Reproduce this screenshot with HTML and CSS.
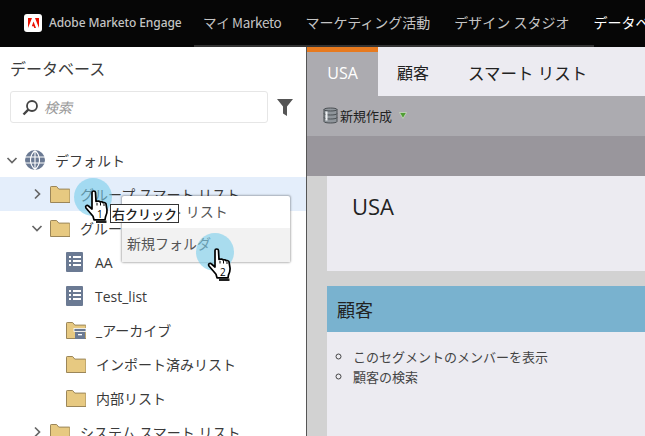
FILE: index.html
```html
<!DOCTYPE html>
<html lang="ja">
<head>
<meta charset="utf-8">
<title>Marketo データベース</title>
<link rel="stylesheet" href="styles.css">
</head>
<body>
<svg class="defs" width="0" height="0" aria-hidden="true">
  <defs>
    <symbol id="folder" viewBox="0 0 20 17">
      <path d="M.5 16.500V1.200q0-.7.7-.7h5.400l2.200 2.600h10.500q.7 0 .7.7v12.700z" fill="#e7c981" stroke="#9b8659"/>
    </symbol>
    <symbol id="list" viewBox="0 0 18 20">
      <rect width="17" height="20" rx="1" fill="#6b7a93"/>
      <path d="M3 4h2v2H3zM7 4h8v2H7zM3 8h2v2H3zM7 8h8v2H7zM3 12h2v2H3zM7 12h8v2H7z" fill="#fff"/>
    </symbol>
    <symbol id="hand" viewBox="0 0 28 36">
      <path d="M9 2.500c0-2 3.400-2 3.500 0l.5 9 2-.4c1.200-.2 2 .3 2.200 1 1-.6 2.600-.4 3 .7 1-.5 2.500-.1 2.800 1l1 6c.3 2.500-.5 5-1.500 7l-.5 3H11l-1-3.500L3 18c-1.200-2 1-3.500 2.500-2L9 19z" fill="#fff" stroke="#000" stroke-width="1.700" stroke-linejoin="round"/>
      <path d="M13 30.500h10.500v2.500H13z" fill="#222"/>
      <path d="M14 13v2.500M17.500 13v2.500M21 14v2" stroke="#000" stroke-width="1"/>
    </symbol>
  </defs>
</svg>

<header class="topbar">
  <div class="brand">
    <span class="logo">
      <svg width="11" height="10" viewBox="0 0 11 10"><path d="M4 0H0v10zM7 0h4v10zM5.500 3.600 8 10H6.300l-.7-1.800H3.800z" fill="#eb1000"/></svg>
    </span>
    <span class="brand-name">Adobe Marketo Engage</span>
  </div>
  <nav class="mainnav">
    <span class="navitem first">マイ Marketo</span>
    <span class="navitem">マーケティング活動</span>
    <span class="navitem">デザイン スタジオ</span>
    <span class="navitem active">データベース</span>
  </nav>
</header>

<div class="app">
  <aside class="sidebar">
    <h1 class="side-title">データベース</h1>
    <div class="search-row">
      <div class="search">
        <svg class="search-icon" width="17" height="17" viewBox="0 0 17 17"><circle cx="10" cy="7" r="5" fill="none" stroke="#444" stroke-width="1.800"/><path d="M6.300 10.700 1.500 15.500" stroke="#444" stroke-width="2.400"/></svg>
        <span class="placeholder">検索</span>
      </div>
      <svg class="filter" width="16" height="17" viewBox="0 0 16 17"><path d="M0 0h16L10 7.500V17l-4-2.500V7.500z" fill="#555"/></svg>
    </div>

    <ul class="tree">
      <li class="row lvl0">
        <svg class="chev" width="12" height="12" viewBox="0 0 12 12"><path d="M1.500 4 6 8.500 10.500 4" fill="none" stroke="#666" stroke-width="1.700"/></svg>
        <svg class="globe" width="20" height="20" viewBox="0 0 20 20"><circle cx="10" cy="10" r="10" fill="#6b7a93"/><path d="M0 7h20M0 13h20M10 0v20M10 .5c-6 5-6 14 0 19M10 .5c6 5 6 14 0 19" fill="none" stroke="#fff" stroke-width="1.100"/></svg>
        <span class="label">デフォルト</span>
      </li>
      <li class="row lvl1 selected">
        <svg class="chev" width="12" height="12" viewBox="0 0 12 12"><path d="M4 1.500 8.500 6 4 10.500" fill="none" stroke="#666" stroke-width="1.700"/></svg>
        <svg class="ficon"><use href="#folder"/></svg>
        <span class="label">グループ スマート リスト</span>
      </li>
      <li class="row lvl1">
        <svg class="chev" width="12" height="12" viewBox="0 0 12 12"><path d="M1.500 4 6 8.500 10.500 4" fill="none" stroke="#666" stroke-width="1.700"/></svg>
        <svg class="ficon"><use href="#folder"/></svg>
        <span class="label">グループ リスト</span>
      </li>
      <li class="row lvl2">
        <svg class="licon"><use href="#list"/></svg>
        <span class="label">AA</span>
      </li>
      <li class="row lvl2">
        <svg class="licon"><use href="#list"/></svg>
        <span class="label">Test_list</span>
      </li>
      <li class="row lvl2">
        <svg class="ficon" viewBox="0 0 20 17"><use href="#folder" width="20" height="17"/><rect x="8" y="6.500" width="12" height="3" fill="#6b7a93" stroke="#fff" stroke-width=".8"/><path d="M9 10h10v7H9z" fill="#6b7a93"/><path d="M12 12h4v1.300h-4z" fill="#fff"/></svg>
        <span class="label">_アーカイブ</span>
      </li>
      <li class="row lvl2">
        <svg class="ficon"><use href="#folder"/></svg>
        <span class="label">インポート済みリスト</span>
      </li>
      <li class="row lvl2">
        <svg class="ficon"><use href="#folder"/></svg>
        <span class="label">内部リスト</span>
      </li>
      <li class="row lvl1">
        <svg class="chev" width="12" height="12" viewBox="0 0 12 12"><path d="M4 1.500 8.500 6 4 10.500" fill="none" stroke="#666" stroke-width="1.700"/></svg>
        <svg class="ficon"><use href="#folder"/></svg>
        <span class="label">システム スマート リスト</span>
      </li>
    </ul>
  </aside>

  <main class="main">
    <div class="tabs">
      <span class="tab current">USA</span>
      <span class="tab">顧客</span>
      <span class="tab wide">スマート リスト</span>
    </div>
    <div class="toolbar">
      <svg width="15" height="17" viewBox="0 0 15 17"><path d="M1 2.500C1 .5 14 .5 14 2.500v12c0 2-13 2-13 0z" fill="#8f959b" stroke="#4a4f53"/><path d="M1 2.500c0 2 13 2 13 0M1 6.500c0 2 13 2 13 0M1 10.500c0 2 13 2 13 0" fill="none" stroke="#4a4f53"/><path d="M3.500 4.500v9" stroke="#eef0f2" stroke-width="2"/></svg>
      <span class="toolbar-label">新規作成</span>
      <svg class="caret" width="8" height="7" viewBox="0 0 8 7"><path d="M.5.500h7L4 6.500z" fill="#4f9e33" stroke="#d5e2cd" stroke-width=".7"/></svg>
    </div>
    <div class="subbar"></div>
    <div class="content">
      <section class="panel-head">USA</section>
      <section class="card">
        <h2 class="card-title">顧客</h2>
        <ul class="links">
          <li>このセグメントのメンバーを表示</li>
          <li>顧客の検索</li>
        </ul>
      </section>
    </div>
  </main>
</div>

<div class="menu">
  <div class="menu-item">スマート リスト</div>
  <div class="menu-item hover">新規フォルダ</div>
</div>

<div class="ripple r1"></div>
<div class="ripple r2"></div>
<span class="tip">右クリック</span>
<svg class="hand h1"><use href="#hand"/></svg>
<svg class="hand h2"><use href="#hand"/></svg>
<span class="step s1">1</span>
<span class="step s2">2</span>
</body>
</html>
```
FILE: styles.css
```css
* { box-sizing: border-box; }
html, body { margin: 0; height: 100%; }
body {
  width: 645px;
  height: 436px;
  overflow: hidden;
  position: relative;
  background: #fff;
  font-family: "Open Sans", "Noto Sans CJK JP", sans-serif;
  color: #333;
}
.defs { position: absolute; }

.topbar {
  height: 47px;
  background: #060606;
  display: flex;
  align-items: flex-start;
  overflow: hidden;
}
.brand {
  display: flex;
  align-items: center;
  gap: 7px;
  height: 45px;
  padding-left: 24px;
  width: 194px;
  flex: none;
}
.logo {
  width: 18px;
  height: 18px;
  background: #fff;
  border-radius: 3px;
  display: flex;
  align-items: center;
  justify-content: center;
}
.brand-name {
  font-family: "Noto Sans", "Noto Sans CJK JP", sans-serif;
  font-size: 12px;
  font-weight: 500;
  color: #c4c4c4;
  white-space: nowrap;
  letter-spacing: -.1px;
}
.mainnav {
  display: flex;
  width: 400px;
  flex: none;
  height: 47px;
  border-bottom: 2px solid #333;
  padding-left: 9px;
  gap: 24px;
  white-space: nowrap;
}
.navitem {
  font-family: "Noto Sans CJK JP", sans-serif;
  font-size: 14px;
  line-height: 45px;
  color: #c4c4c4;
}
.navitem.first { font-size: 13.500px; letter-spacing: -.3px; }
.navitem.active { color: #fff; }

.app { display: flex; height: 389px; }

.sidebar {
  width: 307px;
  flex: none;
  border-right: 1px solid #555;
  padding-top: 10px;
  overflow: hidden;
}
.side-title {
  margin: 0 0 0 10px;
  font-family: "Noto Sans CJK JP", sans-serif;
  font-size: 16px;
  font-weight: 400;
  line-height: 22px;
  color: #3c3c3c;
}
.search-row {
  display: flex;
  align-items: center;
  margin: 12px 0 0 10px;
  gap: 9px;
}
.search {
  width: 258px;
  height: 32px;
  border: 1px solid #e6e6e6;
  border-radius: 3px;
  display: flex;
  align-items: center;
  padding-left: 11px;
  gap: 5px;
}
.placeholder {
  font-family: "Noto Sans CJK JP", sans-serif;
  font-size: 14px;
  font-style: italic;
  color: #999;
}
.tree { list-style: none; margin: 20px 0 0; padding: 0; }
.row {
  height: 34px;
  display: flex;
  align-items: center;
  white-space: nowrap;
}
.row.selected { background: #e4eefb; }
.lvl0 { padding-left: 6px; }
.lvl1 { padding-left: 31px; }
.lvl2 { padding-left: 66px; }
.chev { flex: none; margin-right: 7px; }
.globe { flex: none; margin-right: 10px; }
.ficon { width: 20px; height: 17px; flex: none; margin-right: 10px; }
.licon { width: 18px; height: 20px; flex: none; margin-right: 11px; }
.label {
  font-family: "Open Sans", "Noto Sans CJK JP", sans-serif;
  font-size: 14px;
  color: #3a3a3a;
}

.main { flex: 1; min-width: 0; }
.tabs {
  height: 49px;
  background: #ecebf1;
  display: flex;
}
.tab {
  font-family: "Open Sans", "Noto Sans CJK JP", sans-serif;
  font-size: 16px;
  line-height: 19px;
  padding: 17px 19px 0;
  color: #222;
  white-space: nowrap;
}
.tab.wide { font-size: 16.500px; padding-left: 20px; }
.tab.current {
  width: 71px;
  background: #acabb0;
  color: #fff;
  border-top: 5px solid #e77a1f;
  padding: 12px 0 0;
  text-align: center;
}
.toolbar {
  height: 40px;
  background: #acabb0;
  display: flex;
  align-items: center;
  padding: 0 0 2px 16px;
  gap: 2px;
}
.toolbar-label {
  font-family: "Noto Sans CJK JP", sans-serif;
  font-size: 13px;
  color: #222;
  margin-right: 5px;
}
.subbar { height: 40px; background: #99969c; }
.content {
  height: 260px;
  background: #d2d2d2;
  padding-left: 20px;
}
.panel-head {
  height: 95px;
  background: #ecebf1;
  padding: 15px 0 0 25px;
  font-family: "Open Sans", sans-serif;
  font-size: 22px;
  line-height: 30px;
  color: #222;
}
.card { margin-top: 15px; background: #ecebf1; height: 150px; }
.card-title {
  margin: 0;
  height: 46px;
  background: #79b2cf;
  padding-left: 10px;
  font-family: "Noto Sans CJK JP", sans-serif;
  font-size: 18px;
  font-weight: 400;
  line-height: 46px;
  color: #222;
}
.links {
  list-style: circle;
  margin: 0;
  padding: 15px 0 0 26px;
  font-family: "Noto Sans CJK JP", sans-serif;
  font-size: 13px;
  line-height: 20px;
  color: #444;
}

.menu {
  position: absolute;
  left: 122px;
  top: 196px;
  width: 168px;
  height: 66px;
  background: #fff;
  border-radius: 2px;
  box-shadow: 0 0 2px 1px rgba(0, 0, 0, .28);
}
.menu-item {
  height: 32px;
  padding-left: 5px;
  font-family: "Noto Sans CJK JP", sans-serif;
  font-size: 14px;
  line-height: 31px;
  color: #555;
  white-space: nowrap;
}
.menu-item.hover { height: 34px; background: #f2f2f2; }
.ripple {
  position: absolute;
  width: 38px;
  height: 38px;
  border-radius: 50%;
  background: rgba(120, 205, 235, .6);
}
.r1 { left: 74px; top: 178px; }
.r2 { left: 196px; top: 233px; }
.tip {
  position: absolute;
  left: 110px;
  top: 204px;
  height: 19px;
  padding: 0 1px;
  background: #fff;
  border: 1px solid #333;
  font-family: "Noto Sans CJK JP", sans-serif;
  font-size: 13px;
  font-weight: 500;
  line-height: 17px;
  color: #222;
  white-space: nowrap;
}
.hand { position: absolute; width: 28px; height: 36px; }
.h1 { left: 83px; top: 190px; }
.h2 { left: 206px; top: 248px; }
.step {
  position: absolute;
  font-family: "Open Sans", sans-serif;
  font-size: 10px;
  line-height: 10px;
  color: #000;
}
.s1 { left: 97px; top: 209px; }
.s2 { left: 220px; top: 267px; }
```
